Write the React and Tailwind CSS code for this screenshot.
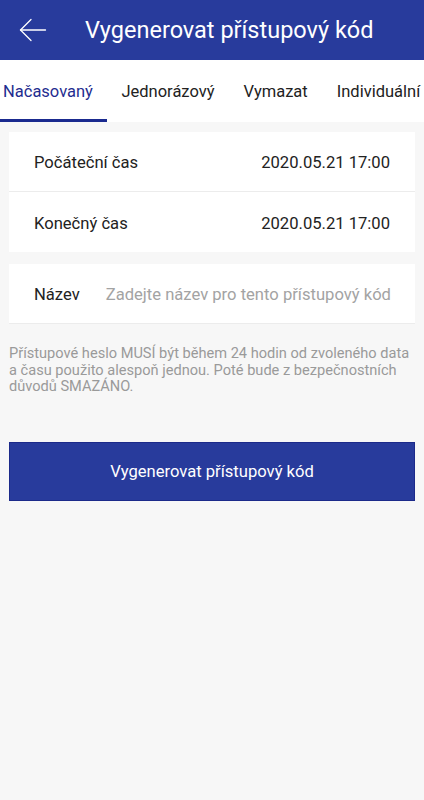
import React from 'react';

const tabs = ['Načasovaný', 'Jednorázový', 'Vymazat', 'Individuální'];

const Row = ({ label, value, last }) => (
    <div className={`flex h-[60px] items-center justify-between px-[25px] pt-[4px] ${last ? '' : 'border-b border-[#ececec]'}`}>
        <span className="text-[16.6px] text-[#222]">{label}</span>
        <span className="text-[16.6px] text-[#222]">{value}</span>
    </div>
);

const App = () => {
    return (
        <div className="flex min-h-[800px] w-[424px] flex-col overflow-hidden bg-[#f7f7f7] font-['Roboto',sans-serif]">
            <header className="flex h-[60px] items-center bg-[#283b9c]">
                <span className="ml-[19px] flex h-[24px] w-[28px] items-center">
                    <svg width="28" height="24" viewBox="0 0 28 24" fill="none" stroke="white" strokeWidth="1.3" strokeLinecap="round" strokeLinejoin="round">
                        <path d="M26.5 12H1.5" />
                        <path d="M12 1.5L1.5 12L12 22.5" />
                    </svg>
                </span>
                <h1 className="ml-[38px] pt-[1px] text-[23.5px] leading-none text-white">Vygenerovat přístupový kód</h1>
            </header>

            <nav className="flex h-[62px] items-end overflow-hidden whitespace-nowrap bg-white">
                {tabs.map((t, i) => (
                    <div
                        key={t}
                        className={`relative flex h-full items-center pt-[3px] text-[16.5px] ${
                            i === 0 ? 'pl-[3px] pr-[14px] text-[#1f2d8f]' : 'px-[14.5px] text-[#222]'
                        }`}
                    >
                        {t}
                        {i === 0 && <span className="absolute bottom-0 left-0 h-[3px] w-full bg-[#1a2a8f]" />}
                    </div>
                ))}
            </nav>

            <div className="px-[9px] pt-[10px]">
                <section className="bg-white">
                    <Row label="Počáteční čas" value="2020.05.21 17:00" />
                    <Row label="Konečný čas" value="2020.05.21 17:00" last />
                </section>

                <section className="mt-[12px] flex h-[60px] items-center whitespace-nowrap border-b border-[#ececec] bg-white px-[25px] pt-[3px]">
                    <span className="text-[16.6px] text-[#222]">Název</span>
                    <span className="ml-[26px] text-[16.6px] text-[#a3a3a3]">Zadejte název pro tento přístupový kód</span>
                </section>

                <p className="mt-[21px] text-[14.6px] leading-[16.5px] text-[#9a9a9a]">
                    Přístupové heslo MUSÍ být během 24 hodin od zvoleného data a času použito alespoň jednou. Poté bude z bezpečnostních důvodů SMAZÁNO.
                </p>

                <button className="mt-[47px] flex h-[59px] w-full items-center justify-center border border-[#1c2a8a] bg-[#283b9c] pt-[3px] text-[16.6px] text-white">
                    Vygenerovat přístupový kód
                </button>
            </div>
        </div>
    );
};

export default App;
